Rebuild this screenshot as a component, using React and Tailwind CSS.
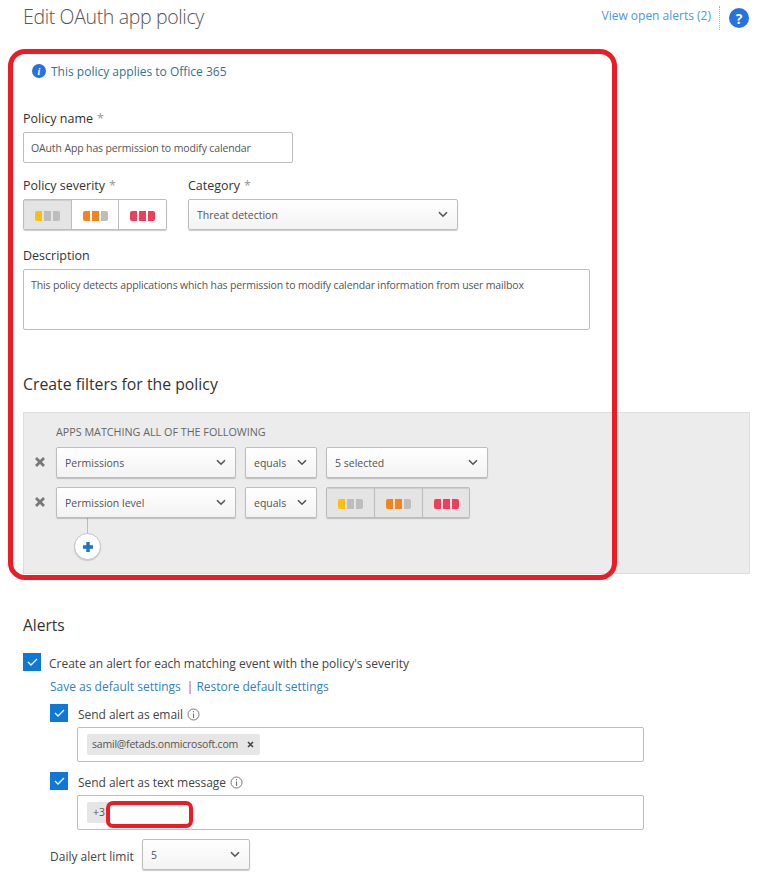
import React from "react";

function Chevron() {
  return (
    <svg width="10" height="7" viewBox="0 0 10 7" fill="none">
      <path d="M1 1.2 L5 5.2 L9 1.2" stroke="#555" strokeWidth="1.6" />
    </svg>
  );
}

function Select({ label, className = "" }) {
  return (
    <div className={`flex items-center justify-between pl-[8px] pr-[9px] border border-[#bdbdbd] rounded-[2px] bg-gradient-to-b from-white to-[#f3f3f3] shadow-[0_1px_1px_rgba(0,0,0,0.2)] text-[10.5px] text-[#555] ${className}`}>
      <span className="pt-[2px]">{label}</span>
      <Chevron />
    </div>
  );
}

function Bars({ level }) {
  const colors = {
    1: ["bg-[#fcc00f]", "bg-[#bdbdbd]", "bg-[#bdbdbd]"],
    2: ["bg-[#f28420]", "bg-[#f28420]", "bg-[#bdbdbd]"],
    3: ["bg-[#f03e5a]", "bg-[#f03e5a]", "bg-[#f03e5a]"],
  }[level];
  return (
    <div className="flex gap-[2px] mt-[2px]">
      <span className={`w-[7px] h-[10px] rounded-l-[2px] ${colors[0]}`} />
      <span className={`w-[7px] h-[10px] ${colors[1]}`} />
      <span className={`w-[7px] h-[10px] rounded-r-[2px] ${colors[2]}`} />
    </div>
  );
}

function Severity({ active, middle, className = "" }) {
  const cell = (level, width, on) => (
    <div className={`flex items-center justify-center h-full ${width} ${level < 3 ? "border-r border-[#bdbdbd]" : ""} ${on ? "bg-[#e4e4e4] shadow-[inset_0_1px_1px_rgba(0,0,0,0.1)]" : "bg-white"}`}>
      <Bars level={level} />
    </div>
  );
  return (
    <div className={`flex h-[31px] border border-[#bdbdbd] rounded-[2px] shadow-[0_1px_1px_rgba(0,0,0,0.2)] overflow-hidden ${className}`}>
      {cell(1, "w-[48px] shrink-0", active.includes(1))}
      {cell(2, `${middle} shrink-0`, active.includes(2))}
      {cell(3, "flex-1", active.includes(3))}
    </div>
  );
}

function Label({ children, required }) {
  return (
    <div className="text-[12.5px] leading-[16px] text-[#333] font-medium">
      {children}
      {required && <span className="ml-[4px] text-[#999] font-normal">*</span>}
    </div>
  );
}

function Check() {
  return (
    <div className="flex items-center justify-center w-[18px] h-[18px] bg-[#0f78d4] shrink-0">
      <svg width="11" height="8" viewBox="0 0 11 8" fill="none">
        <path d="M1 4 L4 7 L10 1" stroke="#fff" strokeWidth="1.3" />
      </svg>
    </div>
  );
}

function InfoOutline() {
  return (
    <svg width="13" height="13" viewBox="0 0 13 13" fill="none" className="ml-[4px] mt-[3px]">
      <circle cx="6.5" cy="6.5" r="5.5" stroke="#777" strokeWidth="1" />
      <path d="M6.5 5.5 V10" stroke="#777" strokeWidth="1.2" />
      <path d="M6.5 3 V4.3" stroke="#777" strokeWidth="1.2" />
    </svg>
  );
}

function Remove() {
  return (
    <svg width="10" height="10" viewBox="0 0 10 10" className="shrink-0 -mt-[2px]" fill="none">
      <path d="M1 1 L9 9 M9 1 L1 9" stroke="#777" strokeWidth="2.8" />
    </svg>
  );
}

export default function App() {
  return (
    <div
      className="relative w-[764px] h-[872px] overflow-hidden bg-white pl-[23px] text-[#444]"
      style={{ fontFamily: '"Open Sans", "Noto Sans", sans-serif' }}
    >
      {/* Header */}
      <div className="flex items-start h-[51px] pr-[15px]">
        <div className="text-[19.5px] leading-[28px] mt-[3px] font-light text-[#555] tracking-[-0.35px]">Edit OAuth app policy</div>
        <div className="ml-auto flex items-start pt-[6px]">
          <span className="text-[12px] leading-[20px] text-[#4a98e6]">View open alerts (2)</span>
          <span className="ml-[8px] h-[24px] border-l border-dotted border-[#aaa]" />
          <span className="ml-[9px] mt-[2px] flex items-center justify-center w-[20px] h-[20px] rounded-full bg-[#2672de] text-white text-[14px] font-bold">?</span>
        </div>
      </div>

      {/* Applies to */}
      <div className="flex items-center ml-[9px] mt-[12px] h-[16px]">
        <span className="flex items-center justify-center w-[14px] h-[14px] rounded-full bg-[#2672de] text-white text-[10px] font-bold italic" style={{ fontFamily: '"Liberation Serif", serif' }}>i</span>
        <span className="ml-[5px] pt-[2px] text-[12px] text-[#2f7399]">This policy applies to Office 365</span>
      </div>

      {/* Policy name */}
      <div className="mt-[32px]"><Label required>Policy name</Label></div>
      <div className="mt-[5px] w-[270px] h-[31px] flex items-center px-[7px] pt-[2px] border border-[#bdbdbd] rounded-[2px] text-[10.5px] tracking-[-0.13px] text-[#555]">
        OAuth App has permission to modify calendar
      </div>

      {/* Severity + category */}
      <div className="flex mt-[15px]">
        <div className="w-[165px]">
          <Label required>Policy severity</Label>
          <Severity active={[1]} middle="w-[47px]" className="mt-[5px] w-[144px]" />
        </div>
        <div>
          <Label required>Category</Label>
          <Select label="Threat detection" className="mt-[5px] w-[270px] h-[31px]" />
        </div>
      </div>

      {/* Description */}
      <div className="mt-[18px]"><Label>Description</Label></div>
      <div className="mt-[5px] w-[567px] h-[61px] px-[7px] pt-[7px] border border-[#bdbdbd] rounded-[2px] text-[10.5px] leading-[16px] tracking-[-0.145px] text-[#555]">
        This policy detects applications which has permission to modify calendar information from user mailbox
      </div>

      <div className="mt-[43px] text-[15.8px] leading-[22px] font-medium text-[#333]">Create filters for the policy</div>

      {/* Filter panel */}
      <div className="mt-[17px] w-[727px] h-[162px] bg-[#ececec] border border-[#ddd] pl-[11px] pt-[12px]">
        <div className="ml-[21px] text-[10.75px] leading-[14px] font-medium text-[#666]">APPS MATCHING ALL OF THE FOLLOWING</div>
        <div className="flex items-center mt-[8px]">
          <Remove />
          <Select label="Permissions" className="ml-[11px] w-[180px] h-[31px]" />
          <Select label="equals" className="ml-[9px] w-[72px] h-[31px]" />
          <Select label="5 selected" className="ml-[9px] w-[162px] h-[31px]" />
        </div>
        <div className="flex items-center mt-[9px]">
          <Remove />
          <Select label="Permission level" className="ml-[11px] w-[180px] h-[31px]" />
          <Select label="equals" className="ml-[9px] w-[72px] h-[31px]" />
          <Severity active={[1, 2, 3]} middle="w-[48px]" className="ml-[9px] w-[144px]" />
        </div>
        <div className="ml-[52px] w-px h-[15px] bg-[#bbb]" />
        <div className="ml-[39px] flex items-center justify-center w-[27px] h-[27px] rounded-full bg-white border border-[#c4c4c4] shadow-[0_1px_1px_rgba(0,0,0,0.15)]">
          <svg width="12" height="12" viewBox="0 0 12 12"><path d="M4.3 1h3.4v3.3H11v3.4H7.7V11H4.3V7.7H1V4.3h3.3z" fill="#1a74c9" /></svg>
        </div>
      </div>

      {/* Alerts */}
      <div className="mt-[41px] text-[15.5px] leading-[20px] font-medium text-[#333]">Alerts</div>
      <div className="flex items-center mt-[18px] h-[18px]">
        <Check />
        <span className="ml-[8px] pt-[4px] text-[12px] leading-[18px] text-[#444]">Create an alert for each matching event with the policy's severity</span>
      </div>
      <div className="ml-[27px] mt-[7px] text-[12px] leading-[18px] text-[#2f7fc8]">
        Save as default settings<span className="ml-[6px] mr-[3px] text-[#b44]">|</span>Restore default settings
      </div>
      <div className="ml-[27px] flex items-center mt-[8px] h-[18px]">
        <Check />
        <span className="ml-[10px] pt-[4px] text-[12px] text-[#444] tracking-[-0.05px]">Send alert as email</span>
        <InfoOutline />
      </div>
      <div className="ml-[54px] mt-[5px] w-[567px] h-[35px] flex items-center pl-[9px] border border-[#bdbdbd] rounded-[2px]">
        <span className="flex items-center h-[21px] w-[173px] pl-[5px] bg-[#e6e6e6] rounded-[2px] text-[10.5px] tracking-[-0.2px] text-[#555]">
          samil@fetads.onmicrosoft.com
          <svg width="7" height="7" viewBox="0 0 7 7" className="ml-auto mr-[6px]" fill="none"><path d="M1 1 L6 6 M6 1 L1 6" stroke="#444" strokeWidth="1.6" /></svg>
        </span>
      </div>
      <div className="ml-[27px] flex items-center mt-[10px] h-[18px]">
        <Check />
        <span className="ml-[10px] pt-[4px] text-[12px] text-[#444] tracking-[-0.05px]">Send alert as text message</span>
        <InfoOutline />
      </div>
      <div className="ml-[54px] mt-[5px] w-[567px] h-[35px] flex items-center pl-[9px] border border-[#bdbdbd] rounded-[2px]">
        <span className="flex items-center h-[21px] w-[30px] pl-[6px] bg-[#e6e6e6] rounded-[2px] text-[10.5px] text-[#555]">+3</span>
      </div>
      <div className="ml-[27px] flex items-center mt-[9px]">
        <span className="w-[92px] pt-[4px] text-[12px] text-[#444]">Daily alert limit</span>
        <Select label="5" className="w-[108px] h-[31px]" />
      </div>

      {/* Red annotations drawn over the page */}
      <div className="absolute left-[8px] top-[49px] w-[609px] h-[531px] border-[5px] border-[#ed1c24] rounded-[17px] pointer-events-none" />
      <div className="absolute left-[106px] top-[801px] w-[87px] h-[27px] bg-white border-[4px] border-[#ed1c24] rounded-[7px]" />
    </div>
  );
}
